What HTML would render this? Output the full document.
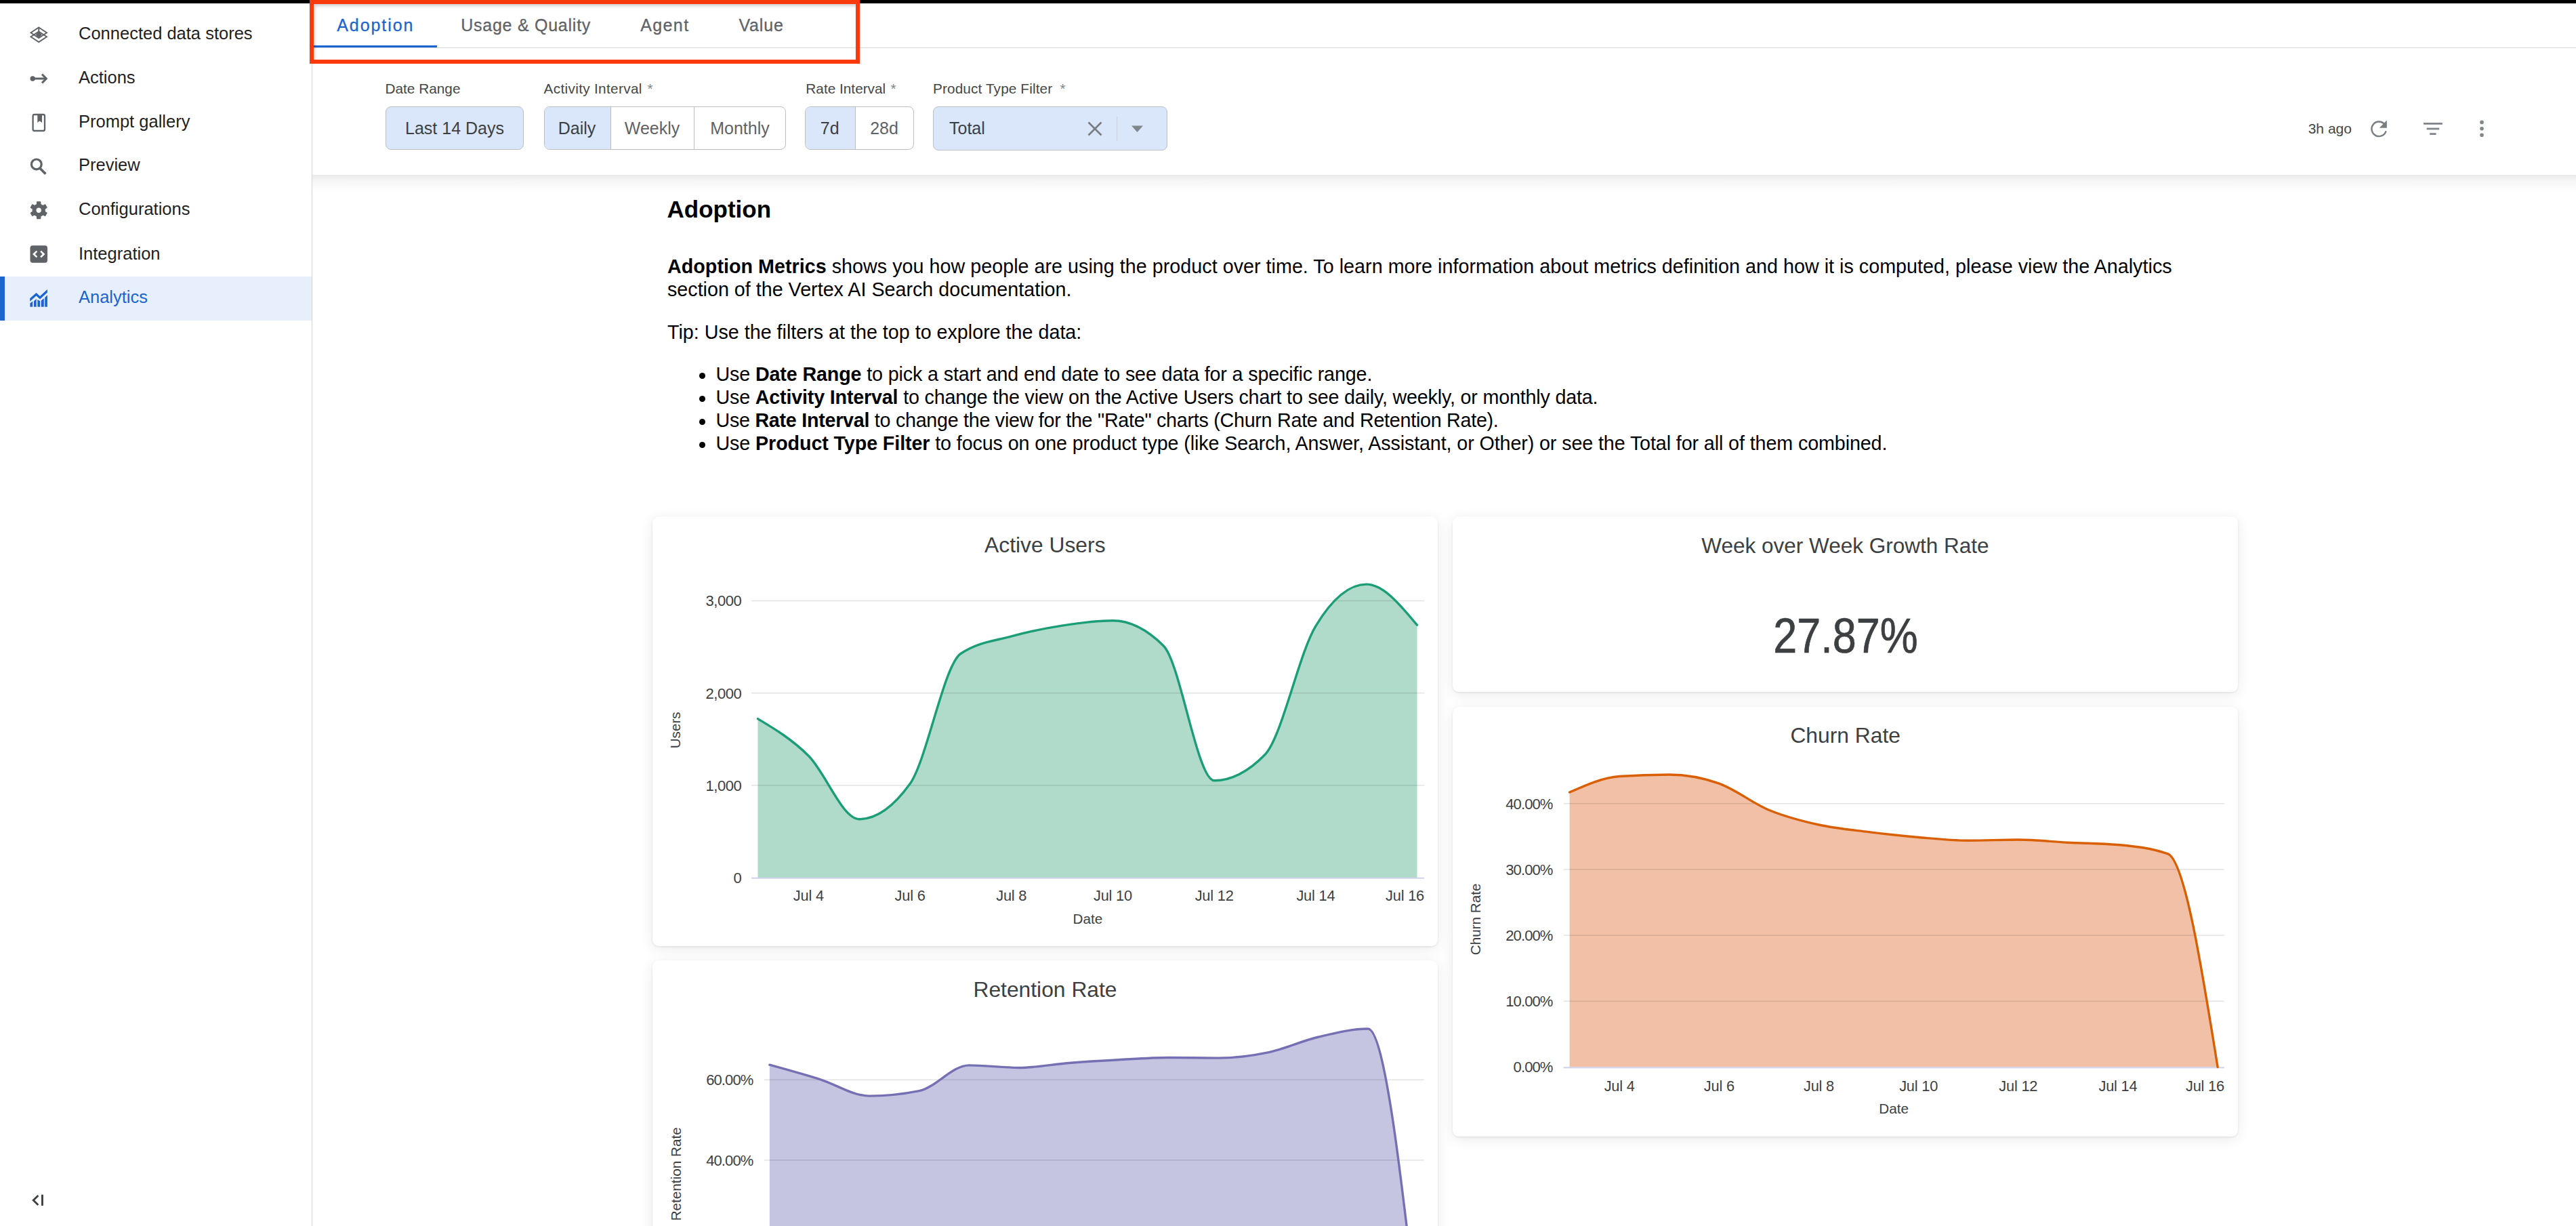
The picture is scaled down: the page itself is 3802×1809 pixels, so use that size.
<!DOCTYPE html><html><head><meta charset="utf-8"><title>Analytics</title><style>
*{box-sizing:border-box}
html,body{margin:0;padding:0}
body{width:3802px;height:1809px;overflow:hidden;position:relative;background:#fff;font-family:"Liberation Sans", sans-serif}
.t{position:absolute;white-space:pre;line-height:1}
.abs{position:absolute}
svg{position:absolute;left:0;top:0;overflow:visible}
</style></head><body>
<div class="abs" style="left:461px;top:258px;width:3341px;height:26px;background:linear-gradient(#e9e9e9,#f6f6f6 35%,#fff)"></div>
<div class="abs" style="left:963px;top:762px;width:1159px;height:634px;background:#fff;border-radius:9px;box-shadow:0 1px 3px rgba(0,0,0,0.09),0 4px 20px rgba(0,0,0,0.085)"></div>
<div class="abs" style="left:2144px;top:762px;width:1159px;height:259px;background:#fff;border-radius:9px;box-shadow:0 1px 3px rgba(0,0,0,0.09),0 4px 20px rgba(0,0,0,0.085)"></div>
<div class="abs" style="left:2144px;top:1043px;width:1159px;height:634px;background:#fff;border-radius:9px;box-shadow:0 1px 3px rgba(0,0,0,0.09),0 4px 20px rgba(0,0,0,0.085)"></div>
<div class="abs" style="left:963px;top:1417px;width:1159px;height:483px;background:#fff;border-radius:9px;box-shadow:0 1px 3px rgba(0,0,0,0.09),0 4px 20px rgba(0,0,0,0.085)"></div>
<div class="abs" style="left:0;top:0;width:3802px;height:5px;background:#000"></div>
<div class="abs" style="left:460px;top:5px;width:1px;height:1804px;background:#d3d5d9"></div>
<div class="abs" style="left:0;top:408px;width:460px;height:65px;background:#e7effd"></div>
<div class="abs" style="left:0;top:408px;width:7px;height:65px;background:#1b64d1"></div>
<div class="t" style="left:116.00px;top:37.11px;font-size:25.5px;color:#1f1f1f;font-weight:normal;">Connected data stores</div>
<div class="t" style="left:116.00px;top:101.71px;font-size:25.5px;color:#1f1f1f;font-weight:normal;">Actions</div>
<div class="t" style="left:116.00px;top:167.41px;font-size:25.5px;color:#1f1f1f;font-weight:normal;">Prompt gallery</div>
<div class="t" style="left:116.00px;top:231.41px;font-size:25.5px;color:#1f1f1f;font-weight:normal;">Preview</div>
<div class="t" style="left:116.00px;top:296.41px;font-size:25.5px;color:#1f1f1f;font-weight:normal;">Configurations</div>
<div class="t" style="left:116.00px;top:361.71px;font-size:25.5px;color:#1f1f1f;font-weight:normal;">Integration</div>
<div class="t" style="left:116.00px;top:426.41px;font-size:25.5px;color:#1b64d1;font-weight:normal;">Analytics</div>

<svg width="3802" height="1809" viewBox="0 0 3802 1809">
 <g fill="none" stroke="#5f6368" stroke-width="1.9" stroke-linejoin="miter">
  <path d="M57.26,40.5 L69,48.3 L57.26,56.1 L45.5,48.3 Z"/>
  <path d="M57.26,46.5 L69,54.3 L57.26,62.1 L45.5,54.3 Z"/>
  <path d="M57.26,40.5 V47"/>
 </g>
 <path d="M57.26,46.5 L61.8,51.3 L57.26,56.1 L52.7,51.3 Z" fill="#5f6368"/>
 <circle cx="48.2" cy="116" r="3.7" fill="#5f6368"/>
 <path d="M48,116 H68" stroke="#5f6368" stroke-width="3"/>
 <path d="M62,109.6 L68.4,116 L62,122.4" fill="none" stroke="#5f6368" stroke-width="3"/>
 <rect x="48.6" y="169" width="17.4" height="24" rx="2.2" fill="none" stroke="#5f6368" stroke-width="2.3"/>
 <path d="M55.3,169 V181 L58.6,178.6 L62,181 V169 Z" fill="#5f6368"/>
 <circle cx="53.8" cy="242.4" r="7.4" fill="none" stroke="#5f6368" stroke-width="3.2"/>
 <path d="M58.8,248.2 L67.4,256.6" stroke="#5f6368" stroke-width="3.6"/>
 <path fill="#5f6368" fill-rule="evenodd" stroke="#5f6368" stroke-width="1.2" stroke-linejoin="round" d="M54.48,301.41 L54.70,297.85 L59.70,297.85 L59.92,301.41 L63.45,303.45 L66.64,301.86 L69.15,306.19 L66.17,308.16 L66.17,312.24 L69.15,314.21 L66.64,318.54 L63.45,316.95 L59.92,318.99 L59.70,322.55 L54.70,322.55 L54.48,318.99 L50.95,316.95 L47.76,318.54 L45.25,314.21 L48.23,312.24 L48.23,308.16 L45.25,306.19 L47.76,301.86 L50.95,303.45 Z M61.5,310.2 A4.3,4.3 0 1,0 52.900000000000006,310.2 A4.3,4.3 0 1,0 61.5,310.2 Z"/>
 <rect x="44.5" y="362.3" width="25.5" height="25.4" rx="3.6" fill="#5f6368"/>
 <path d="M54.4,370.6 L49.9,375 L54.4,379.4 M60.1,370.6 L64.6,375 L60.1,379.4" fill="none" stroke="#fff" stroke-width="2.6"/>
 <g fill="#1b64d1">
  <path d="M44.2,440.2 L53.5,432 L59,436.9 L69.9,427 V431.6 L59,441.6 L53.5,436.6 L44.2,444.8 Z"/>
  <path d="M44.4,447.6 L48.2,444.6 V452.7 H44.4 Z"/>
  <path d="M50,444.2 L53.7,441 V452.7 H50 Z"/>
  <path d="M55.4,441.9 L59,444.2 V452.7 H55.4 Z"/>
  <path d="M60.7,443.5 L64.8,440.2 V452.7 H60.7 Z"/>
  <path d="M66.2,439 L69.9,435.3 V452.7 H66.2 Z"/>
 </g>
 <path d="M56.4,1764 L49.2,1771 L56.4,1778" fill="none" stroke="#3c4043" stroke-width="2.8"/>
 <rect x="61" y="1762.7" width="2.9" height="16.3" fill="#3c4043"/>
</svg>
<div class="abs" style="left:461px;top:70px;width:3341px;height:1px;background:#d5d7db"></div>
<div class="abs" style="left:463px;top:67px;width:182px;height:3.2px;background:#1b64d1"></div>
<div class="t" style="left:497.20px;top:25.14px;font-size:25px;color:#1b64d1;font-weight:normal;letter-spacing:1.93px;-webkit-text-stroke:0.3px #1b64d1;">Adoption</div>
<div class="t" style="left:680.20px;top:25.14px;font-size:25px;color:#5f6368;font-weight:normal;letter-spacing:0.75px;-webkit-text-stroke:0.3px #5f6368;">Usage &amp; Quality</div>
<div class="t" style="left:945.20px;top:25.14px;font-size:25px;color:#5f6368;font-weight:normal;letter-spacing:1.4px;-webkit-text-stroke:0.3px #5f6368;">Agent</div>
<div class="t" style="left:1090.50px;top:25.14px;font-size:25px;color:#5f6368;font-weight:normal;letter-spacing:0.8px;-webkit-text-stroke:0.3px #5f6368;">Value</div>
<div class="t" style="left:568.50px;top:121.39px;font-size:20.8px;color:#444746;font-weight:normal;">Date Range</div>
<div class="t" style="left:802.60px;top:121.39px;font-size:20.8px;color:#444746;font-weight:normal;letter-spacing:0.31px;">Activity Interval</div>
<div class="t" style="left:1189.30px;top:121.39px;font-size:20.8px;color:#444746;font-weight:normal;">Rate Interval</div>
<div class="t" style="left:1377.00px;top:121.39px;font-size:20.8px;color:#444746;font-weight:normal;letter-spacing:0.11px;">Product Type Filter</div>
<div class="t" style="left:955.50px;top:121.39px;font-size:20.8px;color:#80868b;font-weight:normal;">*</div>
<div class="t" style="left:1314.50px;top:121.39px;font-size:20.8px;color:#80868b;font-weight:normal;">*</div>
<div class="t" style="left:1564.50px;top:121.39px;font-size:20.8px;color:#80868b;font-weight:normal;">*</div>
<div class="abs" style="left:569.3px;top:157.3px;width:203.5px;height:64.19999999999999px;background:#dae6fa;border:1.4px solid #bdbfc0;border-radius:8px;overflow:hidden"></div>
<div class="t" style="left:-1329.00px;width:4000px;text-align:center;top:176.84px;font-size:25px;color:#3c4043;font-weight:normal;">Last 14 Days</div>
<div class="abs" style="left:802.6px;top:157.4px;width:357px;height:63.4px;background:#fff;border:1.4px solid #bdbfc0;border-radius:8px;overflow:hidden"><div class="abs" style="left:0;top:0;width:97px;height:63px;background:#dae6fa"></div><div class="abs" style="left:97px;top:0;width:1.4px;height:63px;background:#bdbfc0"></div><div class="abs" style="left:220.5px;top:0;width:1.4px;height:63px;background:#bdbfc0"></div></div>
<div class="t" style="left:-1148.50px;width:4000px;text-align:center;top:176.84px;font-size:25px;color:#3c4043;font-weight:normal;">Daily</div>
<div class="t" style="left:-1037.50px;width:4000px;text-align:center;top:176.84px;font-size:25px;color:#5f6368;font-weight:normal;">Weekly</div>
<div class="t" style="left:-908.00px;width:4000px;text-align:center;top:176.84px;font-size:25px;color:#5f6368;font-weight:normal;">Monthly</div>
<div class="abs" style="left:1187.8px;top:157.4px;width:161px;height:63.4px;background:#fff;border:1.4px solid #bdbfc0;border-radius:8px;overflow:hidden"><div class="abs" style="left:0;top:0;width:73px;height:63px;background:#dae6fa"></div><div class="abs" style="left:73px;top:0;width:1.4px;height:63px;background:#bdbfc0"></div></div>
<div class="t" style="left:-775.30px;width:4000px;text-align:center;top:176.84px;font-size:25px;color:#3c4043;font-weight:normal;">7d</div>
<div class="t" style="left:-695.00px;width:4000px;text-align:center;top:176.84px;font-size:25px;color:#5f6368;font-weight:normal;">28d</div>
<div class="abs" style="left:1377px;top:157.4px;width:346px;height:64.4px;background:#dae6fa;border:1.4px solid #bdbfc0;border-radius:8px;overflow:hidden"></div>
<div class="t" style="left:1401.00px;top:176.84px;font-size:25px;color:#3c4043;font-weight:normal;">Total</div>
<svg width="3802" height="1809" viewBox="0 0 3802 1809">
 <path d="M1606.5,180.5 L1625.5,199.5 M1625.5,180.5 L1606.5,199.5" stroke="#787c80" stroke-width="2.6"/>
 <rect x="1648" y="172" width="1.2" height="35.6" fill="#c9d3e3"/>
 <path d="M1670,185.6 H1687 L1678.5,195 Z" fill="#80868b"/>
</svg>
<div class="t" style="left:3406.70px;top:179.02px;font-size:21px;color:#444746;font-weight:normal;">3h ago</div>
<svg width="3802" height="1809" viewBox="0 0 3802 1809">
 <path d="M3521.6,193.3 A10.8,10.8 0 1,1 3518.6,182.4" fill="none" stroke="#787d82" stroke-width="2.4"/>
 <path d="M3511.8,188.8 L3522.8,188.8 L3522.8,177.6 Z" fill="#787d82"/>
 <rect x="3577" y="181" width="27.8" height="2.8" fill="#80868b"/>
 <rect x="3581.6" y="188.6" width="18.6" height="2.8" fill="#80868b"/>
 <rect x="3586.2" y="196.2" width="9.4" height="2.8" fill="#80868b"/>
 <circle cx="3663" cy="180.4" r="2.8" fill="#80868b"/>
 <circle cx="3663" cy="189.8" r="2.8" fill="#80868b"/>
 <circle cx="3663" cy="199.2" r="2.8" fill="#80868b"/>
</svg>
<div class="t" style="left:984.50px;top:291.37px;font-size:35px;color:#000;font-weight:bold;">Adoption</div>
<div class="t" style="left:985.00px;top:379.31px;font-size:28.7px;color:#000;font-weight:normal;letter-spacing:0.028px;"><b>Adoption Metrics</b> shows you how people are using the product over time. To learn more information about metrics definition and how it is computed, please view the Analytics</div>
<div class="t" style="left:985.00px;top:413.31px;font-size:28.7px;color:#000;font-weight:normal;">section of the Vertex AI Search documentation.</div>
<div class="t" style="left:985.00px;top:476.21px;font-size:28.7px;color:#000;font-weight:normal;">Tip: Use the filters at the top to explore the data:</div>
<div class="abs" style="left:1032.2px;top:550.10px;width:9px;height:9px;border-radius:50%;background:#000"></div>
<div class="t" style="left:1056.50px;top:538.41px;font-size:28.7px;color:#000;font-weight:normal;letter-spacing:-0.135px;">Use <b>Date Range</b> to pick a start and end date to see data for a specific range.</div>
<div class="abs" style="left:1032.2px;top:584.07px;width:9px;height:9px;border-radius:50%;background:#000"></div>
<div class="t" style="left:1056.50px;top:572.38px;font-size:28.7px;color:#000;font-weight:normal;letter-spacing:-0.18px;">Use <b>Activity Interval</b> to change the view on the Active Users chart to see daily, weekly, or monthly data.</div>
<div class="abs" style="left:1032.2px;top:618.04px;width:9px;height:9px;border-radius:50%;background:#000"></div>
<div class="t" style="left:1056.50px;top:606.35px;font-size:28.7px;color:#000;font-weight:normal;letter-spacing:-0.27px;">Use <b>Rate Interval</b> to change the view for the "Rate" charts (Churn Rate and Retention Rate).</div>
<div class="abs" style="left:1032.2px;top:652.01px;width:9px;height:9px;border-radius:50%;background:#000"></div>
<div class="t" style="left:1056.50px;top:640.32px;font-size:28.7px;color:#000;font-weight:normal;letter-spacing:-0.105px;">Use <b>Product Type Filter</b> to focus on one product type (like Search, Answer, Assistant, or Other) or see the Total for all of them combined.</div>
<div class="t" style="left:-457.70px;width:4000px;text-align:center;top:788.78px;font-size:31.8px;color:#3c4043;font-weight:normal;">Active Users</div>
<svg width="3802" height="1809" viewBox="0 0 3802 1809"><path d="M1118.50,1060.62C1143.45,1075.57 1168.40,1090.52 1193.35,1115.21C1218.30,1139.89 1243.25,1208.73 1268.20,1208.73C1293.15,1208.73 1318.10,1191.35 1343.05,1156.59C1368.00,1121.83 1392.95,981.57 1417.90,964.51C1442.85,947.45 1467.80,945.82 1492.75,938.92C1517.70,932.02 1542.65,926.99 1567.60,923.13C1592.55,919.27 1617.50,915.78 1642.45,915.78C1667.40,915.78 1692.35,928.17 1717.30,952.94C1742.25,977.72 1767.20,1151.69 1792.15,1151.69C1817.10,1151.69 1842.05,1138.94 1867.00,1113.44C1891.95,1087.94 1916.90,964.92 1941.85,923.81C1966.80,882.70 1991.75,862.14 2016.70,862.14C2041.65,862.14 2066.60,892.23 2091.55,922.31 L2091.55,1294.90 L1118.50,1294.90 Z" fill="#b0dac9"/><rect x="1109" y="1157.97" width="993" height="1.6" fill="#000" fill-opacity="0.105"/><rect x="1109" y="1021.84" width="993" height="1.6" fill="#000" fill-opacity="0.105"/><rect x="1109" y="885.71" width="993" height="1.6" fill="#000" fill-opacity="0.105"/><rect x="1109" y="1294.70" width="993" height="2" fill="#cfd3ea"/><path d="M1118.50,1060.62C1143.45,1075.57 1168.40,1090.52 1193.35,1115.21C1218.30,1139.89 1243.25,1208.73 1268.20,1208.73C1293.15,1208.73 1318.10,1191.35 1343.05,1156.59C1368.00,1121.83 1392.95,981.57 1417.90,964.51C1442.85,947.45 1467.80,945.82 1492.75,938.92C1517.70,932.02 1542.65,926.99 1567.60,923.13C1592.55,919.27 1617.50,915.78 1642.45,915.78C1667.40,915.78 1692.35,928.17 1717.30,952.94C1742.25,977.72 1767.20,1151.69 1792.15,1151.69C1817.10,1151.69 1842.05,1138.94 1867.00,1113.44C1891.95,1087.94 1916.90,964.92 1941.85,923.81C1966.80,882.70 1991.75,862.14 2016.70,862.14C2041.65,862.14 2066.60,892.23 2091.55,922.31" fill="none" stroke="#1b9e77" stroke-width="3.4" stroke-linejoin="round" stroke-linecap="round"/></svg>
<div class="t" style="right:2707.70px;top:1284.78px;font-size:22px;color:#3c4043;font-weight:normal;letter-spacing:-0.45px;">0</div>
<div class="t" style="right:2707.70px;top:1148.65px;font-size:22px;color:#3c4043;font-weight:normal;letter-spacing:-0.45px;">1,000</div>
<div class="t" style="right:2707.70px;top:1012.52px;font-size:22px;color:#3c4043;font-weight:normal;letter-spacing:-0.45px;">2,000</div>
<div class="t" style="right:2707.70px;top:876.39px;font-size:22px;color:#3c4043;font-weight:normal;letter-spacing:-0.45px;">3,000</div>
<div class="t" style="left:-806.65px;width:4000px;text-align:center;top:1310.65px;font-size:21.8px;color:#3c4043;font-weight:normal;letter-spacing:-0.2px;">Jul 4</div>
<div class="t" style="left:-656.95px;width:4000px;text-align:center;top:1310.65px;font-size:21.8px;color:#3c4043;font-weight:normal;letter-spacing:-0.2px;">Jul 6</div>
<div class="t" style="left:-507.25px;width:4000px;text-align:center;top:1310.65px;font-size:21.8px;color:#3c4043;font-weight:normal;letter-spacing:-0.2px;">Jul 8</div>
<div class="t" style="left:-357.55px;width:4000px;text-align:center;top:1310.65px;font-size:21.8px;color:#3c4043;font-weight:normal;letter-spacing:-0.2px;">Jul 10</div>
<div class="t" style="left:-207.85px;width:4000px;text-align:center;top:1310.65px;font-size:21.8px;color:#3c4043;font-weight:normal;letter-spacing:-0.2px;">Jul 12</div>
<div class="t" style="left:-58.15px;width:4000px;text-align:center;top:1310.65px;font-size:21.8px;color:#3c4043;font-weight:normal;letter-spacing:-0.2px;">Jul 14</div>
<div class="t" style="right:1700.00px;top:1310.65px;font-size:21.8px;color:#3c4043;font-weight:normal;letter-spacing:-0.2px;">Jul 16</div>
<div class="t" style="left:-394.70px;width:4000px;text-align:center;top:1346.18px;font-size:20.7px;color:#3c4043;font-weight:normal;">Date</div>
<div class="t" style="left:796.50px;top:1067.45px;width:400px;text-align:center;font-size:20.7px;color:#3c4043;transform:rotate(-90deg)">Users</div>
<div class="t" style="left:723.50px;width:4000px;text-align:center;top:790.24px;font-size:31.5px;color:#3c4043;font-weight:normal;">Week over Week Growth Rate</div>
<div class="t" style="left:724.00px;width:4000px;text-align:center;top:903.28px;font-size:71.5px;color:#3c4043;font-weight:normal;transform:scaleX(0.88);transform-origin:2000px 0;-webkit-text-stroke:0.7px #3c4043;">27.87%</div>
<div class="t" style="left:723.70px;width:4000px;text-align:center;top:1070.38px;font-size:31.8px;color:#3c4043;font-weight:normal;">Churn Rate</div>
<svg width="3802" height="1809" viewBox="0 0 3802 1809"><path d="M2316.60,1169.08C2341.13,1158.11 2365.65,1147.14 2390.18,1145.46C2414.71,1143.77 2439.23,1142.93 2463.76,1142.93C2488.29,1142.93 2512.81,1147.34 2537.34,1156.05C2561.87,1164.77 2586.39,1185.07 2610.92,1195.23C2635.45,1205.38 2659.97,1211.60 2684.50,1217.00C2709.03,1222.39 2733.55,1224.52 2758.08,1227.59C2782.61,1230.67 2807.13,1233.36 2831.66,1235.47C2856.19,1237.57 2880.71,1240.23 2905.24,1240.23C2929.77,1240.23 2954.29,1239.06 2978.82,1239.06C3003.35,1239.06 3027.87,1242.00 3052.40,1243.24C3076.93,1244.49 3101.45,1244.34 3125.98,1246.55C3150.51,1248.75 3175.03,1251.02 3199.56,1259.96C3224.09,1268.90 3248.61,1421.70 3273.14,1574.50 L3273.14,1574.50 L2316.60,1574.50 Z" fill="#f1c0a6"/><rect x="2307.6" y="1476.50" width="975.3000000000002" height="1.6" fill="#000" fill-opacity="0.105"/><rect x="2307.6" y="1379.30" width="975.3000000000002" height="1.6" fill="#000" fill-opacity="0.105"/><rect x="2307.6" y="1282.10" width="975.3000000000002" height="1.6" fill="#000" fill-opacity="0.105"/><rect x="2307.6" y="1184.90" width="975.3000000000002" height="1.6" fill="#000" fill-opacity="0.105"/><rect x="2307.6" y="1574.30" width="975.3000000000002" height="2" fill="#cfd3ea"/><path d="M2316.60,1169.08C2341.13,1158.11 2365.65,1147.14 2390.18,1145.46C2414.71,1143.77 2439.23,1142.93 2463.76,1142.93C2488.29,1142.93 2512.81,1147.34 2537.34,1156.05C2561.87,1164.77 2586.39,1185.07 2610.92,1195.23C2635.45,1205.38 2659.97,1211.60 2684.50,1217.00C2709.03,1222.39 2733.55,1224.52 2758.08,1227.59C2782.61,1230.67 2807.13,1233.36 2831.66,1235.47C2856.19,1237.57 2880.71,1240.23 2905.24,1240.23C2929.77,1240.23 2954.29,1239.06 2978.82,1239.06C3003.35,1239.06 3027.87,1242.00 3052.40,1243.24C3076.93,1244.49 3101.45,1244.34 3125.98,1246.55C3150.51,1248.75 3175.03,1251.02 3199.56,1259.96C3224.09,1268.90 3248.61,1421.70 3273.14,1574.50" fill="none" stroke="#d95f02" stroke-width="3.4" stroke-linejoin="round" stroke-linecap="round"/></svg>
<div class="t" style="right:1510.50px;top:1564.38px;font-size:22px;color:#3c4043;font-weight:normal;letter-spacing:-0.9px;">0.00%</div>
<div class="t" style="right:1510.50px;top:1467.18px;font-size:22px;color:#3c4043;font-weight:normal;letter-spacing:-0.9px;">10.00%</div>
<div class="t" style="right:1510.50px;top:1369.98px;font-size:22px;color:#3c4043;font-weight:normal;letter-spacing:-0.9px;">20.00%</div>
<div class="t" style="right:1510.50px;top:1272.78px;font-size:22px;color:#3c4043;font-weight:normal;letter-spacing:-0.9px;">30.00%</div>
<div class="t" style="right:1510.50px;top:1175.58px;font-size:22px;color:#3c4043;font-weight:normal;letter-spacing:-0.9px;">40.00%</div>
<div class="t" style="left:390.18px;width:4000px;text-align:center;top:1591.65px;font-size:21.8px;color:#3c4043;font-weight:normal;letter-spacing:-0.2px;">Jul 4</div>
<div class="t" style="left:537.34px;width:4000px;text-align:center;top:1591.65px;font-size:21.8px;color:#3c4043;font-weight:normal;letter-spacing:-0.2px;">Jul 6</div>
<div class="t" style="left:684.50px;width:4000px;text-align:center;top:1591.65px;font-size:21.8px;color:#3c4043;font-weight:normal;letter-spacing:-0.2px;">Jul 8</div>
<div class="t" style="left:831.66px;width:4000px;text-align:center;top:1591.65px;font-size:21.8px;color:#3c4043;font-weight:normal;letter-spacing:-0.2px;">Jul 10</div>
<div class="t" style="left:978.82px;width:4000px;text-align:center;top:1591.65px;font-size:21.8px;color:#3c4043;font-weight:normal;letter-spacing:-0.2px;">Jul 12</div>
<div class="t" style="left:1125.98px;width:4000px;text-align:center;top:1591.65px;font-size:21.8px;color:#3c4043;font-weight:normal;letter-spacing:-0.2px;">Jul 14</div>
<div class="t" style="right:519.10px;top:1591.65px;font-size:21.8px;color:#3c4043;font-weight:normal;letter-spacing:-0.2px;">Jul 16</div>
<div class="t" style="left:795.20px;width:4000px;text-align:center;top:1626.08px;font-size:20.7px;color:#3c4043;font-weight:normal;">Date</div>
<div class="t" style="left:1978.40px;top:1346.35px;width:400px;text-align:center;font-size:20.7px;color:#3c4043;transform:rotate(-90deg)">Churn Rate</div>
<div class="t" style="left:-457.50px;width:4000px;text-align:center;top:1444.58px;font-size:31.8px;color:#3c4043;font-weight:normal;">Retention Rate</div>
<svg width="3802" height="1809" viewBox="0 0 3802 1809"><path d="M1135.90,1571.19C1160.43,1577.95 1184.95,1584.71 1209.48,1592.36C1234.01,1600.01 1258.53,1617.09 1283.06,1617.09C1307.59,1617.09 1332.11,1614.62 1356.64,1609.68C1381.17,1604.73 1405.69,1571.84 1430.22,1571.84C1454.75,1571.84 1479.27,1575.46 1503.80,1575.46C1528.33,1575.46 1552.85,1570.42 1577.38,1568.46C1601.91,1566.51 1626.43,1565.04 1650.96,1563.72C1675.49,1562.39 1700.01,1560.52 1724.54,1560.52C1749.07,1560.52 1773.59,1561.17 1798.12,1561.17C1822.65,1561.17 1847.17,1558.02 1871.70,1552.87C1896.23,1547.72 1920.75,1536.08 1945.28,1530.27C1969.81,1524.46 1994.33,1518.00 2018.86,1518.00C2043.39,1518.00 2067.91,1733.52 2092.44,1949.05 L2092.44,1949.05 L1135.90,1949.05 Z" fill="#c5c5e2"/><rect x="1127.7" y="1711.05" width="973.8999999999999" height="1.6" fill="#000" fill-opacity="0.105"/><rect x="1127.7" y="1592.45" width="973.8999999999999" height="1.6" fill="#000" fill-opacity="0.105"/><rect x="1127.7" y="1948.85" width="973.8999999999999" height="2" fill="#cfd3ea"/><path d="M1135.90,1571.19C1160.43,1577.95 1184.95,1584.71 1209.48,1592.36C1234.01,1600.01 1258.53,1617.09 1283.06,1617.09C1307.59,1617.09 1332.11,1614.62 1356.64,1609.68C1381.17,1604.73 1405.69,1571.84 1430.22,1571.84C1454.75,1571.84 1479.27,1575.46 1503.80,1575.46C1528.33,1575.46 1552.85,1570.42 1577.38,1568.46C1601.91,1566.51 1626.43,1565.04 1650.96,1563.72C1675.49,1562.39 1700.01,1560.52 1724.54,1560.52C1749.07,1560.52 1773.59,1561.17 1798.12,1561.17C1822.65,1561.17 1847.17,1558.02 1871.70,1552.87C1896.23,1547.72 1920.75,1536.08 1945.28,1530.27C1969.81,1524.46 1994.33,1518.00 2018.86,1518.00C2043.39,1518.00 2067.91,1733.52 2092.44,1949.05" fill="none" stroke="#7570b3" stroke-width="3.4" stroke-linejoin="round" stroke-linecap="round"/></svg>
<div class="t" style="right:2690.60px;top:1701.73px;font-size:22px;color:#3c4043;font-weight:normal;letter-spacing:-0.9px;">40.00%</div>
<div class="t" style="right:2690.60px;top:1583.13px;font-size:22px;color:#3c4043;font-weight:normal;letter-spacing:-0.9px;">60.00%</div>
<div class="t" style="left:798.20px;top:1722.05px;width:400px;text-align:center;font-size:20.7px;color:#3c4043;transform:rotate(-90deg)">Retention Rate</div>
<div class="abs" style="left:457px;top:0;width:812px;height:94px;border:6px solid #fa3a0a;box-shadow:inset 2px 3px 4px rgba(0,0,0,0.18)"></div>
</body></html>
